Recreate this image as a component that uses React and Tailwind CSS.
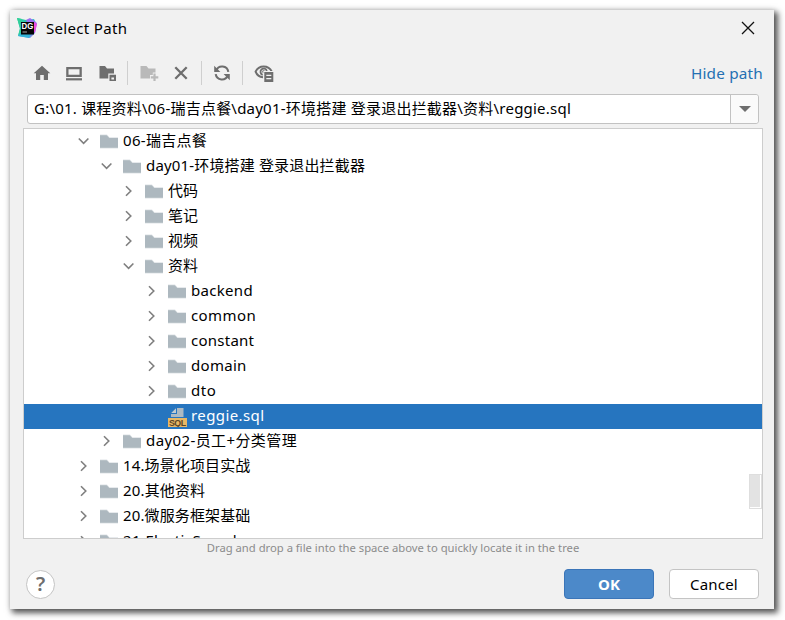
import React from "react";

const FONT = "font-['Noto_Sans','Noto_Sans_CJK_SC',sans-serif]";

const LEVELS = [
  "pl-[53px]",
  "pl-[76px]",
  "pl-[98px]",
  "pl-[121px]",
];

const NODES = [
  { level: 0, open: true, name: "06-瑞吉点餐", tracking: "tracking-[0.3px]" },
  { level: 1, open: true, name: "day01-环境搭建 登录退出拦截器", tracking: "tracking-[0.16px]" },
  { level: 2, name: "代码" },
  { level: 2, name: "笔记" },
  { level: 2, name: "视频" },
  { level: 2, open: true, name: "资料" },
  { level: 3, name: "backend", tracking: "tracking-[0.3px]" },
  { level: 3, name: "common", tracking: "tracking-[0.4px]" },
  { level: 3, name: "constant", tracking: "tracking-[0.25px]" },
  { level: 3, name: "domain", tracking: "tracking-[0.3px]" },
  { level: 3, name: "dto", tracking: "tracking-[0.6px]" },
  { level: 3, file: true, name: "reggie.sql", tracking: "tracking-[0.4px]" },
  { level: 1, name: "day02-员工+分类管理", tracking: "tracking-[0.4px]" },
  { level: 0, name: "14.场景化项目实战", tracking: "tracking-[0.12px]" },
  { level: 0, name: "20.其他资料", tracking: "tracking-[0.15px]" },
  { level: 0, name: "20.微服务框架基础", tracking: "tracking-[0.12px]" },
  { level: 0, name: "21.ElasticSearch", tracking: "tracking-[0.4px]" },
];

function Chevron({ open }) {
  return (
    <svg className="mb-[2px] h-[14px] w-[14px] shrink-0" viewBox="0 0 14 14" fill="none" stroke="#7f7f7f" strokeWidth="1.6">
      <path d={open ? "M1.8 4.5 L6.6 9.3 L11.4 4.5" : "M4 2.2 L8.8 7 L4 11.8"} />
    </svg>
  );
}

function Folder() {
  return (
    <svg className="h-[15px] w-[18px] shrink-0" viewBox="0 0 18 15">
      <path d="M0 .5H7L9.5 3.2H18V14.5H0Z" fill="#dfe4e7" />
      <path d="M0 1.3H6.7L9.3 4H18V13.7H0Z" fill="#adb8bf" />
    </svg>
  );
}

function SqlFile() {
  return (
    <svg className="mt-px h-[19px] w-[19px] shrink-0" viewBox="0 0 19 19">
      <path d="M9 0H15.5V9H3V6H9Z" fill="#aebac2" />
      <path d="M8 .3V5H3.2Z" fill="#c3ccd2" />
      <rect y="10" width="19" height="9" fill="#e9b865" />
      <text x="9.5" y="17.6" textAnchor="middle" textLength="17" letterSpacing="0" fontSize="8.8" fontWeight="700" fill="#5b4526" fontFamily="Liberation Sans, sans-serif">SQL</text>
    </svg>
  );
}

function AppLogo() {
  return (
    <svg className="h-5 w-5" viewBox="0 0 20 20">
      <defs>
        <linearGradient id="logoGreen" x1="0" y1="0" x2="1" y2="1">
          <stop offset="0" stopColor="#21d789" />
          <stop offset=".5" stopColor="#38b8cf" />
          <stop offset="1" stopColor="#9775f8" />
        </linearGradient>
      </defs>
      <path d="M0 0 9 2 17 1 19 5 18 15 13 20 1 18 3 11Z" fill="url(#logoGreen)" />
      <path d="M9 2 13 0 20 5 18 15 15 14Z" fill="#9b70ef" />
      <path d="M17 4 20 6 18 14 16 15Z" fill="#ed4bdf" />
      <path d="M0 0 5 1 5 14 1 18 3 10Z" fill="#31cf9a" />
      <path d="M1 18 4 15 14 16 12 20Z" fill="#35b4d8" />
      <rect x="4" y="4" width="13" height="12.5" fill="#050505" />
      <text x="4.6" y="10.6" textLength="11.8" lengthAdjust="spacingAndGlyphs" fontSize="8.2" fontWeight="700" fill="white" fontFamily="Liberation Sans, sans-serif">DG</text>
      <path d="M5.5 14H10" stroke="#aaa" strokeWidth="1" />
    </svg>
  );
}

function Toolbar() {
  return (
    <div className="flex h-[24px] items-center text-[#6e6e6e]">
      <svg className="ml-[10px] h-[18px] w-[18px]" viewBox="0 0 18 18" fill="currentColor">
        <path d="M9 1.8 17.3 9.3H15V16H10.8V11H7.2V16H3V9.3H.7Z" />
      </svg>
      <svg className="ml-[14px] h-[18px] w-[18px]" viewBox="0 0 18 18" fill="currentColor">
        <path fillRule="evenodd" d="M1.2 3H16.8V13H1.2ZM3.5 5.2V10.8H14.5V5.2Z" />
        <path d="M1 14.2H17V16.4H1Z" />
      </svg>
      <svg className="ml-[15px] h-[18px] w-[19px]" viewBox="0 0 19 18" fill="currentColor">
        <path d="M1.5 2H7L9 4.4H16V9.5H10.3V14.6H1.5Z" />
        <path fillRule="evenodd" d="M11.5 10.7H18V17H11.5ZM13.4 13.4V15.6H16V13.4Z" />
      </svg>
      <div className="ml-[10px] h-6 w-px bg-[#cfcfcf]" />
      <svg className="ml-[12px] h-[18px] w-[19px] text-[#b9b9b9]" viewBox="0 0 19 18" fill="currentColor">
        <path d="M.5 2H6.5L8.5 4.4H15.5V8.5H12.8V11H10V14.6H.5Z" />
        <path d="M13.4 9.5H15.6V12.2H18.3V14.4H15.6V17H13.4V14.4H10.8V12.2H13.4Z" />
      </svg>
      <svg className="ml-[14px] h-[16px] w-[16px]" viewBox="0 0 16 16" fill="none" stroke="currentColor" strokeWidth="2.3">
        <path d="M2.3 2.3 13.7 13.7M13.7 2.3 2.3 13.7" />
      </svg>
      <div className="ml-[12px] h-6 w-px bg-[#cfcfcf]" />
      <svg className="ml-[11px] h-[18px] w-[18px]" viewBox="0 0 18 18" fill="none" stroke="currentColor" strokeWidth="2.1">
        <path d="M3.2 6.6A6.3 6.3 0 0 1 15.3 7.8M14.8 11.4A6.3 6.3 0 0 1 2.7 10.2" />
        <path d="M1.2 1.8V8H7.4ZM16.8 16.2V10H10.6Z" fill="currentColor" stroke="none" />
      </svg>
      <div className="ml-[11px] h-6 w-px bg-[#cfcfcf]" />
      <svg className="ml-[11px] h-[20px] w-[20px]" viewBox="0 0 20 20" fill="none" stroke="currentColor">
        <path d="M9 14.2C5.5 14 2.8 11.8 1.6 8.6 3.2 5.2 6.2 3.5 9.6 3.5S16.2 5.2 17.8 8.6" strokeWidth="2" />
        <path d="M8.7 11.8A3.2 3.2 0 1 1 12.8 8" strokeWidth="1.8" />
        <circle cx="9.6" cy="8.7" r="1.4" fill="currentColor" stroke="none" />
        <path d="M9.3 8H20V20H9.3Z" fill="#f1f1f1" stroke="none" />
        <path d="M10.3 9H19.3V19H10.3Z" fill="currentColor" stroke="none" />
        <path d="M12.3 12.4H17.3M12.3 15.6H17.3" stroke="#f1f1f1" strokeWidth="1.3" />
      </svg>
      <a className="ml-auto mr-[-2px] text-[15.3px] leading-5 tracking-[0.2px] text-[#2470b3]">Hide path</a>
    </div>
  );
}

export default function App() {
  return (
    <div className={`h-[620px] w-[785px] overflow-hidden bg-white p-[10px] text-black ${FONT}`}>
      <div className="flex h-[599px] w-[764px] flex-col bg-[#f1f1f1] px-[13px] shadow-[3px_3px_6px_1px_rgba(0,0,0,0.65),0_0_6px_rgba(0,0,0,0.12)]">
        <div className="flex h-[51px] shrink-0 items-start pt-[8px]">
          <div className="-ml-[6px]"><AppLogo /></div>
          <span className="ml-[9px] text-[15px] leading-5 tracking-[0.32px]">Select Path</span>
          <svg className="ml-auto mr-[6px] mt-[3px] h-[14px] w-[14px]" viewBox="0 0 14 14" fill="none" stroke="#111" strokeWidth="1.3">
            <path d="M1 1 13 13M13 1 1 13" />
          </svg>
        </div>
        <Toolbar />
        <div className="ml-[4px] mt-[9px] flex h-[30px] w-[732px] shrink-0 rounded-[3px] border border-[#c2c2c2] bg-white">
          <div className="flex-1 whitespace-nowrap pl-[6px] text-[15px] leading-[27px] tracking-[0.22px]">G:\01. 课程资料\06-瑞吉点餐\day01-环境搭建 登录退出拦截器\资料\reggie.sql</div>
          <div className="flex w-[28px] items-center justify-center rounded-r-[3px] border-l border-[#c2c2c2] bg-[#fafafa]">
            <div className="h-0 w-0 border-x-[6px] border-t-[6px] border-x-transparent border-t-[#6e6e6e]" />
          </div>
        </div>
        <div className="mt-[4px] flex h-[411px] w-[740px] shrink-0 overflow-hidden border border-[#cdcdcd] bg-white">
          <div className="w-[738px] shrink-0">
            {NODES.map((n) => (
              <div key={n.name} className={`flex h-[25px] items-center ${LEVELS[n.level]} ${n.file ? "bg-[#2675bf] text-white" : ""}`}>
                {n.file ? <div className="w-[14px]" /> : <Chevron open={n.open} />}
                <div className="ml-[9px] flex w-[23px] shrink-0 items-center">{n.file ? <SqlFile /> : <Folder />}</div>
                <span className={`whitespace-nowrap pb-[3px] text-[15px] leading-[22px] ${n.tracking || ""}`}>{n.name}</span>
              </div>
            ))}
          </div>
          <div className="-ml-[13px] mt-[345px] h-[35px] w-[13px] shrink-0 border border-[#dedede] bg-[#e3e3e3] shadow-[inset_-1px_-1px_0_white]" />
        </div>
        <div className="h-[20px] pl-[2px] text-center text-[11.25px] leading-[18px] text-[#8c8c8c]">Drag and drop a file into the space above to quickly locate it in the tree</div>
        <div className="mt-[10px] flex h-[30px] items-center">
          <div className="ml-[3px] flex h-[29px] w-[29px] items-center justify-center rounded-full border border-[#c4c4c4] bg-white text-[20px] font-semibold leading-none text-[#6e6e6e]">?</div>
          <button className="ml-auto h-[30px] w-[90px] rounded-[4px] border border-[#3b75b8] bg-[#4c89c9] text-[15px] font-bold leading-[28px] text-white">OK</button>
          <button className="ml-[15px] mr-[2px] h-[30px] w-[90px] rounded-[4px] border border-[#c4c4c4] bg-white text-[15px] leading-[28px] tracking-[0.2px]">Cancel</button>
        </div>
      </div>
    </div>
  );
}
